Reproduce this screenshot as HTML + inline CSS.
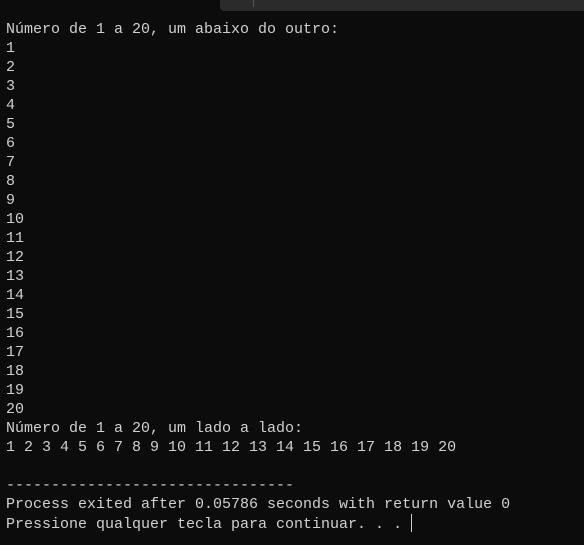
<!DOCTYPE html>
<html><head><meta charset="utf-8"><style>
html,body{margin:0;padding:0;width:584px;height:545px;background:#0c0c0c;overflow:hidden}
.bar{position:absolute;left:0;top:0;width:584px;height:11px;background:#0c0c0c}
.tabr{position:absolute;left:220px;top:0;width:364px;height:11px;background:#2b2b2b;border-bottom-left-radius:4px}
.sep{position:absolute;left:253px;top:0;width:1px;height:7px;background:#555}
pre{position:absolute;left:6px;top:20px;margin:0;font-family:"Liberation Mono",monospace;font-size:15px;line-height:19px;color:#d0d0d0}
.cur{display:inline-block;width:1px;height:18px;background:#ccc;vertical-align:-4px}
</style></head><body>
<div class="bar"></div><div class="tabr"></div><div class="sep"></div>
<pre>Número de 1 a 20, um abaixo do outro:
1
2
3
4
5
6
7
8
9
10
11
12
13
14
15
16
17
18
19
20
Número de 1 a 20, um lado a lado:
1 2 3 4 5 6 7 8 9 10 11 12 13 14 15 16 17 18 19 20

--------------------------------
Process exited after 0.05786 seconds with return value 0
Pressione qualquer tecla para continuar. . . <span class="cur"></span></pre>
</body></html>
